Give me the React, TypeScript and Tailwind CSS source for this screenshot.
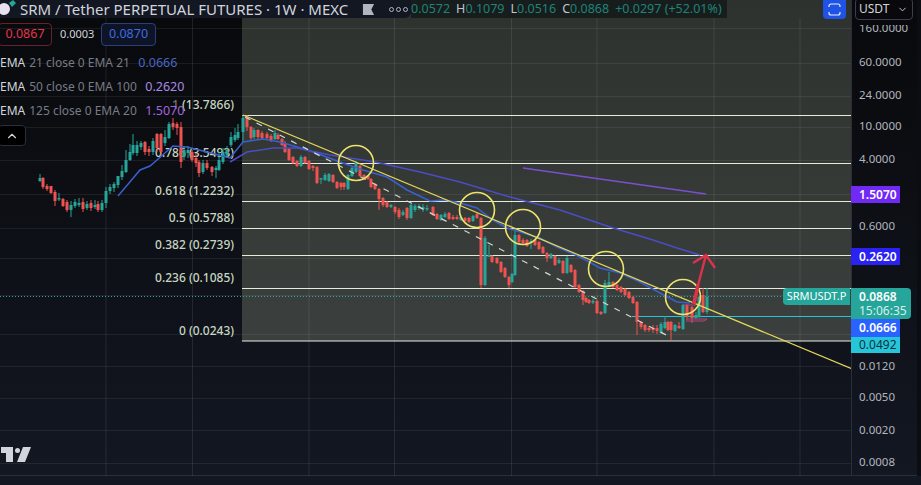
import { ChevronDown, ChevronUp } from "lucide-react";

// x, open, close, high, low (y pixels on the chart)
type Candle = [number, number, number, number?, number?];

const candles: Candle[] = [
  [40, 181, 178, 174, 182], [43, 178, 187, 177, 189], [47, 186, 189, 184, 191], [51, 186, 193, 186, 194],
  [55, 192, 201, 190, 206], [59, 199, 198, 193, 201], [63, 199, 206, 198, 207], [67, 202, 210, 200, 212],
  [71, 210, 205, 201, 217], [75, 206, 202, 199, 208], [79, 205, 203, 198, 207], [83, 202, 209, 198, 212],
  [87, 208, 204, 201, 210], [91, 203, 208, 200, 211], [95, 207, 205, 200, 209], [98, 204, 210, 201, 212],
  [102, 210, 203, 200, 212], [106, 203, 191, 187, 208], [110, 191, 187, 184, 194], [114, 188, 184, 182, 192],
  [118, 185, 176, 176, 188], [122, 177, 171, 165, 180], [126, 172, 160, 150, 173], [130, 160, 152, 144, 161],
  [133, 153, 145, 134, 155], [137, 153, 145, 141, 156], [141, 147, 143, 141, 150], [145, 142, 152, 141, 155],
  [149, 149, 152, 146, 156], [153, 152, 141, 138, 155], [157, 134, 148, 133, 152], [161, 134, 152, 133, 156],
  [165, 143, 137, 130, 146], [169, 138, 124, 122, 139], [173, 123, 127, 118, 130], [177, 124, 128, 122, 135],
  [181, 127, 162, 122, 168], [184, 157, 150, 146, 160], [188, 153, 150, 146, 158], [192, 152, 160, 150, 162],
  [196, 158, 163, 153, 167], [199, 162, 173, 160, 177], [203, 172, 163, 160, 174], [207, 163, 168, 160, 170],
  [212, 167, 172, 166, 176], [216, 170, 168, 166, 178], [219, 170, 160, 152, 171], [223, 162, 152, 148, 164],
  [227, 155, 150, 146, 158], [231, 145, 137, 132, 147], [235, 140, 135, 128, 142], [238, 138, 132, 124, 140],
  [243, 132, 118, 115, 142], [247, 118, 127, 115, 131], [251, 127, 138, 126, 140], [254, 137, 130, 128, 139],
  [258, 130, 137, 129, 139], [262, 133, 138, 131, 139], [267, 134, 138, 132, 139], [271, 136, 141, 134, 142],
  [275, 139, 133, 130, 140], [278, 135, 139, 133, 140], [282, 139, 145, 138, 146], [285, 143, 152, 141, 153],
  [289, 149, 160, 148, 161], [293, 157, 163, 156, 164], [297, 161, 166, 160, 167], [301, 166, 157, 155, 167],
  [305, 157, 163, 156, 164], [309, 161, 169, 160, 170], [313, 166, 168, 165, 171], [317, 167, 183, 166, 184],
  [321, 179, 178, 178, 184], [325, 180, 175, 173, 181], [329, 181, 174, 173, 182], [333, 175, 182, 174, 183],
  [337, 182, 188, 181, 189], [341, 183, 187, 182, 190], [344, 183, 187, 182, 190], [348, 189, 175, 174, 190],
  [352, 176, 168, 167, 177], [356, 172, 163, 161, 173], [360, 166, 176, 165, 177], [364, 175, 179, 174, 180],
  [368, 176, 179, 175, 180], [371, 179, 187, 178, 188], [375, 184, 189, 183, 190], [379, 189, 199, 188, 210],
  [383, 198, 205, 197, 207], [387, 202, 207, 201, 208], [391, 207, 205, 204, 208], [395, 207, 212, 206, 214],
  [399, 210, 217, 208, 219], [403, 215, 212, 210, 216], [407, 208, 218, 207, 220], [411, 218, 205, 204, 219],
  [415, 210, 206, 204, 212], [419, 208, 206, 204, 210], [423, 209, 207, 204, 212], [427, 209, 208, 205, 211],
  [433, 207, 215, 206, 216], [437, 214, 219, 213, 220], [441, 220, 215, 214, 221], [445, 217, 214, 212, 218],
  [449, 213, 219, 212, 220], [453, 217, 219, 215, 220], [457, 217, 219, 215, 220], [461, 220, 217, 215, 221],
  [465, 218, 221, 217, 222], [469, 218, 222, 217, 223], [473, 221, 216, 215, 222], [477, 214, 218, 213, 219],
  [481, 218, 285, 217, 288], [485, 285, 238, 236, 286], [489, 257, 255, 245, 257], [492, 256, 262, 255, 263],
  [497, 258, 263, 257, 264], [501, 262, 272, 261, 273], [505, 268, 277, 267, 278], [509, 277, 285, 276, 288],
  [512, 282, 274, 273, 283], [515, 275, 235, 228, 276], [519, 235, 242, 234, 243], [523, 240, 243, 238, 245],
  [527, 240, 246, 239, 247], [531, 242, 241, 239, 249], [535, 240, 245, 239, 246], [539, 242, 249, 241, 250],
  [543, 247, 253, 246, 254], [547, 253, 258, 252, 262], [551, 258, 254, 253, 259], [555, 256, 265, 255, 266],
  [559, 263, 260, 258, 264], [563, 261, 273, 260, 274], [567, 273, 258, 256, 274], [571, 265, 272, 264, 273],
  [575, 270, 287, 269, 288], [579, 285, 292, 284, 293], [583, 291, 300, 290, 305], [586, 298, 302, 297, 303],
  [589, 300, 303, 299, 304], [593, 302, 301, 299, 304], [597, 301, 313, 300, 314], [601, 312, 314, 311, 315],
  [605, 313, 283, 280, 314], [609, 286, 282, 272, 287], [613, 282, 287, 281, 288], [617, 285, 290, 284, 291],
  [621, 287, 292, 286, 293], [625, 289, 295, 288, 296], [629, 292, 298, 291, 299], [633, 297, 303, 296, 304],
  [637, 302, 322, 301, 335], [641, 322, 327, 321, 329], [645, 325, 330, 324, 332], [649, 328, 330, 326, 332],
  [653, 328, 330, 325, 333], [657, 328, 331, 325, 334], [661, 333, 324, 322, 334], [665, 328, 322, 316, 329],
  [668, 322, 330, 321, 331], [671, 322, 330, 321, 340], [675, 331, 325, 324, 332], [679, 326, 328, 322, 329],
  [683, 329, 305, 304, 330], [687, 305, 317, 304, 320], [692, 307, 318, 306, 323], [696, 318, 315, 312, 319],
  [699, 317, 297, 296, 318], [703, 295, 312, 288, 313], [707, 312, 297, 288, 314],
];

const fibLevels = [115.5, 163.5, 201.5, 228.5, 255.5, 288.5, 341];
const gridY = [28, 63, 96, 127, 160, 194, 228, 258, 295, 334, 366, 398, 430, 463];
const gridX = [106, 192.5, 309, 394.5, 511.5, 597, 714, 800];

const ema21 =
  "118,196 129,183 140,170 150,166 157,160 166,152 173,146 187,147 207,152 230,158 243,142 263,139 280,142 297,147 313,152 340,162 363,170 387,177 407,190 430,201 445,200 460,203 477,208 493,220 507,228 520,232 540,238 557,247 580,257 600,268 620,273 640,282 660,293 677,302 690,303";
const ema50 =
  "230,162 247,152 273,148 297,148 330,155 363,160 380,163 420,172 460,182 510,197 560,210 610,227 653,240 677,248 700,255";
const ema100 = "523,168 593,178 706,194";

const circles = [
  [356, 163],
  [477, 210],
  [523, 227],
  [606, 269],
  [683, 297],
];

const fibLabels = [
  { y: 105, level: "1", price: "(13.7866)", dim: true },
  { y: 153, level: "0.786", price: "(3.5493)" },
  { y: 191, level: "0.618", price: "(1.2232)" },
  { y: 218, level: "0.5", price: "(0.5788)" },
  { y: 245, level: "0.382", price: "(0.2739)" },
  { y: 278, level: "0.236", price: "(0.1085)" },
  { y: 331, level: "0", price: "(0.0243)" },
];

const priceTicks = [
  { y: 28, label: "160.0000" },
  { y: 62, label: "60.0000" },
  { y: 95, label: "24.0000" },
  { y: 126, label: "10.0000" },
  { y: 159, label: "4.0000" },
  { y: 226, label: "0.6000" },
  { y: 366, label: "0.0120" },
  { y: 397, label: "0.0050" },
  { y: 430, label: "0.0020" },
  { y: 462, label: "0.0008" },
];

function ChartDrawing() {
  return (
    <svg className="absolute inset-0" width={851} height={476} viewBox="0 0 851 476" fill="none">
      {gridX.map((x) => (
        <line key={x} x1={x} x2={x} y1={18} y2={476} stroke="#ffffff" strokeOpacity={0.09} />
      ))}
      {gridY.map((y) => (
        <line key={y} x1={0} x2={851} y1={y + 0.5} y2={y + 0.5} stroke="#ffffff" strokeOpacity={0.07} />
      ))}
      <line x1={0} x2={782} y1={296.5} y2={296.5} stroke="#2fa89c" strokeDasharray="1 2" />
      {fibLevels.map((y) => (
        <line key={y} x1={242} x2={851} y1={y} y2={y} stroke="#e4eddc" />
      ))}
      <line x1={632} x2={851} y1={316.5} y2={316.5} stroke="#26c6da" />
      {candles.map(([x, o, c, h, l]) => {
        const color = c < o ? "#26a69a" : "#ef5350";
        const top = Math.min(o, c);
        const bottom = Math.max(o, c);
        return (
          <g key={x}>
            <line x1={x} x2={x} y1={h ?? top - 2} y2={l ?? bottom + 2} stroke={color} />
            <rect x={x - 1.5} y={top} width={3} height={Math.max(bottom - top, 1.5)} fill={color} />
          </g>
        );
      })}
      <polyline points={ema21} stroke="#3a60cf" strokeWidth={1.5} />
      <polyline points={ema50} stroke="#4a4dc4" strokeWidth={1.5} />
      <polyline points={ema100} stroke="#7a4fd0" strokeWidth={1.4} />
      <line x1={243} y1={115} x2={851} y2={368.5} stroke="#e3d75a" strokeWidth={1.2} />
      <line x1={245} y1={117} x2={670} y2={337} stroke="#d4d8d2" strokeWidth={1.2} strokeDasharray="6 7" />
      {circles.map(([cx, cy]) => (
        <circle key={cx} cx={cx} cy={cy} r={17.5} stroke="#ebe36c" strokeWidth={1.6} />
      ))}
      <path d="M684 305H696M688 319H707L704 321H686" stroke="#b5447c" strokeWidth={1} />
      <path d="M693 304L706 255M693 263L706 255L715 268" stroke="#e0314b" strokeWidth={2.4} />
      <path d="M694 304L698 285" stroke="#e0314b" strokeWidth={3.5} />
      <path d="M1 447H13V462H6V453H1Z M31 447L25 462H17L23 447Z" fill="#d1d4dc" />
      <circle cx={17.5} cy={450.5} r={2.5} fill="#d1d4dc" />
    </svg>
  );
}

function EmaRow({ name, value, color, nameWidth }: { name: string; value: string; color: string; nameWidth: string }) {
  return (
    <div className="flex h-6 items-center whitespace-nowrap">
      <span className="text-[12px] text-[#d1d4dc]">EMA</span>
      <span className={`ml-[4px] text-[12px] text-[#787b86] ${nameWidth}`}>{name}</span>
      <span className={`text-[12.5px] ${color}`}>{value}</span>
    </div>
  );
}

function Legend() {
  return (
    <div className="absolute left-0 top-0 flex flex-col">
      <div className="flex h-[18px] items-center">
        <div className="flex h-[18px] w-[411px] items-center overflow-hidden rounded-br-md bg-[#131722]">
          <svg width={20} height={18} viewBox="0 0 20 18" className="shrink-0">
            <circle cx={4} cy={9} r={6} fill="#e6e2f2" />
            <path d="M9 3L13 0L16 3L12 7Z" fill="#26a69a" />
          </svg>
          <span className="whitespace-nowrap text-[15px] text-[#d1d4dc]">
            SRM / Tether PERPETUAL FUTURES · 1W · MEXC
          </span>
          <svg width={13} height={13} viewBox="0 0 14 14" className="ml-[14px] shrink-0">
            <path d="M1 1H13L10 7L13 13H1Z" fill="#b2b5be" />
          </svg>
          <span className="ml-[14px] flex gap-[2px]">
            <i className="h-[5px] w-[5px] rounded-full border border-[#b2b5be]" />
            <i className="h-[5px] w-[5px] rounded-full border border-[#b2b5be]" />
            <i className="h-[5px] w-[5px] rounded-full border border-[#b2b5be]" />
          </span>
        </div>
        <div className="flex h-[18px] w-[316px] items-center gap-[6px] bg-[#171d1c] text-[12.5px] whitespace-nowrap text-[#1f8377]">
          <span>0.0572</span>
          <span>
            <span className="text-[#c3c6ce]">H</span>0.1079
          </span>
          <span>
            <span className="text-[#c3c6ce]">L</span>0.0516
          </span>
          <span>
            <span className="text-[#c3c6ce]">C</span>0.0868
          </span>
          <span>+0.0297 (+52.01%)</span>
        </div>
      </div>
      <div className="ml-[-2px] mt-[5px] flex items-center text-[12.5px]">
        <span className="flex h-[23px] w-[54px] items-center justify-center rounded border border-[#6b1f2c] text-[#e5354b]">
          0.0867
        </span>
        <span className="ml-2 w-[41px] text-[11px] text-[#d1d4dc]">0.0003</span>
        <span className="flex h-[23px] w-[55px] items-center justify-center rounded border border-[#2a3f80] bg-[#0e1426] text-[#3d6be0]">
          0.0870
        </span>
      </div>
      <div className="mt-[5px] flex flex-col">
        <EmaRow name="21 close 0 EMA 21" value="0.0666" color="text-[#4a66c4]" nameWidth="w-[109px]" />
        <EmaRow name="50 close 0 EMA 100" value="0.2620" color="text-[#a98be6]" nameWidth="w-[116px]" />
        <EmaRow name="125 close 0 EMA 20" value="1.5070" color="text-[#a365dc]" nameWidth="w-[116px]" />
      </div>
      <div className="ml-[-2px] mt-[2px] flex h-[21px] w-[28px] items-center justify-center rounded border border-[#2a2e39] bg-black">
        <ChevronUp size={14} className="text-[#d1d4dc]" />
      </div>
    </div>
  );
}

function PriceAxis() {
  return (
    <div className="relative h-[476px] w-[66px] border-l border-[#2a2e39] text-[11.5px] text-[#b2b5be]">
      {priceTicks.map((t) => (
        <span
          key={t.label}
          className="absolute left-[7px] -translate-y-1/2 leading-none whitespace-nowrap"
          style={{ top: t.y }}
        >
          {t.label}
        </span>
      ))}
      <div className="absolute left-[-1px] top-[186px] flex h-[17px] w-[49px] items-center pl-2 text-[12px] font-semibold text-white bg-[#7129f5]">
        1.5070
      </div>
      <div className="absolute left-[-1px] top-[248px] flex h-[17px] w-[49px] items-center pl-2 text-[12px] font-semibold text-white bg-[#2a22f0]">
        0.2620
      </div>
      <div className="absolute left-[-1px] top-[288px] flex h-[31px] w-[60px] flex-col justify-center rounded-r-sm bg-[#26a69a] pl-2 text-[12px] leading-[14px]">
        <span className="font-semibold text-white">0.0868</span>
        <span className="text-[#d6efeb]">15:06:35</span>
      </div>
      <div className="absolute left-[-1px] top-[319px] flex h-[18px] w-[49px] items-center pl-2 text-[12px] font-semibold text-white bg-[#2962ff]">
        0.0666
      </div>
      <div className="absolute left-[-1px] top-[337px] flex h-[16px] w-[49px] items-center pl-2 text-[12px] text-[#10303a] bg-[#26c6da]">
        0.0492
      </div>
      <div className="absolute left-[-69px] top-[288px] flex h-[17px] w-[67px] items-center justify-center rounded-l-sm bg-[#26a69a] text-[11px] text-white">
        SRMUSDT.P
      </div>
      <div className="absolute inset-x-0 top-0 h-[25px] bg-[#09090d]">
        <div className="ml-[3px] mt-[-2px] flex h-[22px] w-[58px] items-center justify-between rounded border border-[#3a3f4e] pl-[3px] pr-1 text-[12px] text-[#d1d4dc]">
          USDT
          <ChevronDown size={11} />
        </div>
      </div>
    </div>
  );
}

export default function App() {
  return (
    <div className="h-[485px] w-[921px] overflow-hidden bg-[#131722] font-['Noto_Sans','Liberation_Sans',sans-serif]">
      <div className="flex h-[476px] border-b border-[#2a2e39] bg-gradient-to-b from-[#08090b] to-[#131722]">
        <div className="relative h-[476px] w-[851px] shrink-0">
          <div className="absolute inset-y-0 left-[242px] right-0 bottom-[135px] bg-gradient-to-b from-[#2e322e] to-[#3b403e]" />
          {fibLabels.map((f) => (
            <div
              key={f.y}
              className="absolute right-[617px] -translate-y-1/2 whitespace-nowrap text-[12px] font-medium text-[#c6d6c2]"
              style={{ top: f.y }}
            >
              <span className={f.dim ? "text-[#6f7570]" : undefined}>{f.level}</span> {f.price}
            </div>
          ))}
          <ChartDrawing />
          <Legend />
          <div className="absolute left-[823px] top-0 flex h-[19px] w-[23px] items-center justify-center rounded-b bg-[#1e53e5]">
            <svg width={13} height={13} viewBox="0 0 13 13" fill="none" stroke="#e6ecff" strokeWidth={1.2}>
              <path d="M1 4V3a2 2 0 0 1 2-2h7a2 2 0 0 1 2 2v1M1 9v1a2 2 0 0 0 2 2h7a2 2 0 0 0 2-2V9" />
            </svg>
          </div>
        </div>
        <PriceAxis />
        <div className="h-[476px] flex-1 bg-[#0c0d12]" />
      </div>
    </div>
  );
}
